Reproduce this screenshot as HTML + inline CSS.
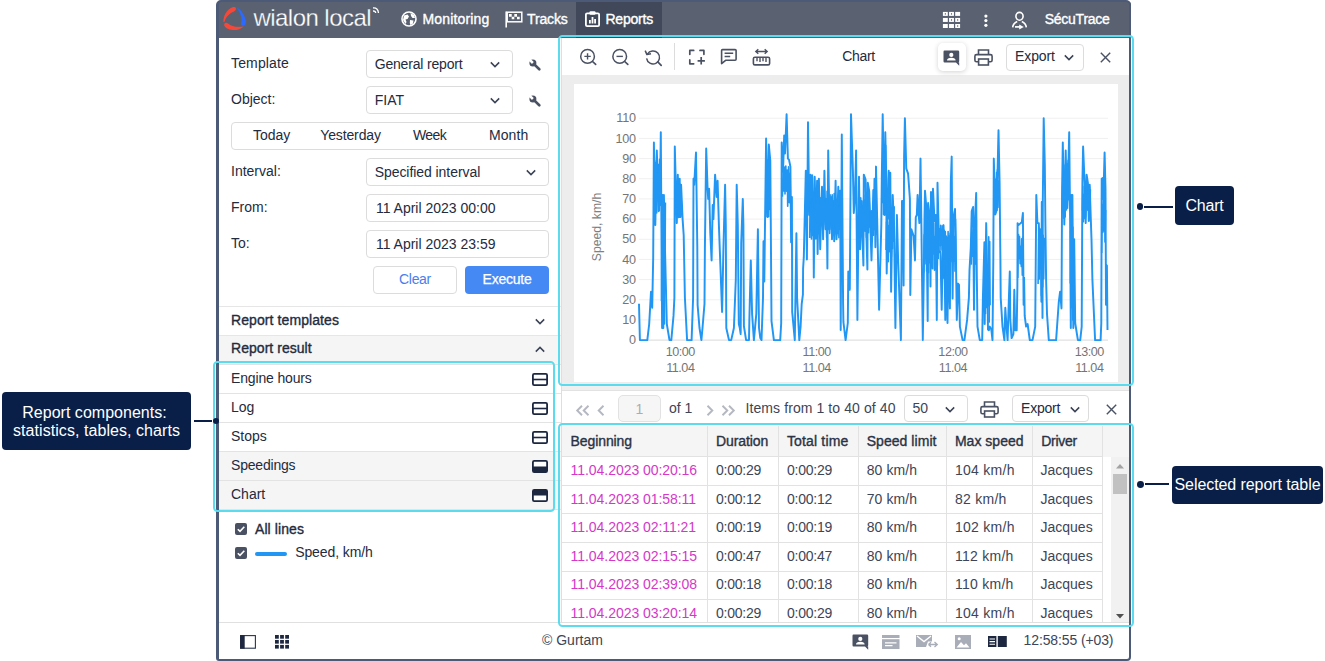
<!DOCTYPE html>
<html><head><meta charset="utf-8"><title>Reports</title>
<style>
*{box-sizing:border-box;margin:0;padding:0}
html,body{width:1325px;height:661px;overflow:hidden;background:#fff}
body{position:relative;font-family:"Liberation Sans",sans-serif;font-size:14px;color:#232b3e}
.abs{position:absolute}
.t{position:absolute;white-space:pre}
.box{position:absolute;border:1px solid #dcdcdc;border-radius:4px;background:#fff}
.cy{position:absolute;border:2.5px solid #5bdcee;border-radius:5px}
.call{position:absolute;background:#0a1f48;color:#fff;border-radius:4px}
svg{overflow:visible}
</style></head><body>
<div class="abs" style="left:217px;top:1px;width:913.5px;height:36.5px;background:#5a6170;border-radius:4px 4px 0 0;"></div>
<div class="abs" style="left:576.3px;top:2px;width:85.5px;height:35.5px;background:#404859;"></div>
<svg class="abs" style="left:222px;top:6px;" width="25" height="25" viewBox="0 0 25 25"><path d="M13.6 1.6 C13 0.6 10.5 1 8.5 2.2 C4.5 4.6 1.5 9.5 1.4 15.5 C1.5 16.3 2.2 16.5 2.6 15.5 C3.8 11 7.5 7 12 5.4 C14 4.7 14.4 2.8 13.6 1.6 Z" fill="#f4493a"/>
<path d="M14.3 1 C18.5 3.2 22.5 8 23.8 14.5 C24.4 18 22.5 20 20.6 19.8 C18.8 19.5 18.6 17.8 19.2 16.2 C20.2 12 18.2 6 14.3 1 Z" fill="#2c69ff"/>
<path d="M2.2 18.2 C2.6 16.6 4.6 16.2 6 17.4 C9.5 20.4 15 21.6 21.8 20.4 C18.5 23.2 13.5 24.8 9 23.8 C5.5 23 1.6 20.8 2.2 18.2 Z" fill="#f4493a"/></svg>
<div class="t" style="top:3.38px;font-size:24px;line-height:29px;height:29px;color:#fff;letter-spacing:-0.55px;left:253.5px;-webkit-text-stroke:0.28px #5a6170;">wialon local</div>
<svg class="abs" style="left:372px;top:6px;" width="8" height="8" viewBox="0 0 8 8"><path d="M1 2 Q6 1.5 6.5 7" fill="none" stroke="#fff" stroke-width="1.3"/><path d="M1 5 Q3.5 4.8 3.7 7" fill="none" stroke="#fff" stroke-width="1.3"/></svg>
<svg class="abs" style="left:401px;top:11px;" width="16" height="16" viewBox="0 0 16 16"><circle cx="8" cy="8" r="7" fill="none" stroke="#fff" stroke-width="1.6"/><path d="M3 4.5 L6.5 3.5 L8 5.5 L6.5 8 L4.5 8.5 L5.5 11 L4.5 13 L2 9Z M9.5 2 L13 4 L14 7 L11.5 7 L10 5Z M9 9 L12.5 9.5 L12 12.5 L9.5 14.3 L8.8 12Z" fill="#fff"/></svg>
<div class="t" style="top:10.55px;font-size:14px;line-height:17px;height:17px;color:#fff;letter-spacing:0.17px;left:422.4px;-webkit-text-stroke:0.36px;">Monitoring</div>
<svg class="abs" style="left:505px;top:10px;" width="18" height="18" viewBox="0 0 18 18"><path d="M1.2 1.5 V17.5" stroke="#fff" stroke-width="1.6" fill="none"/><rect x="2.2" y="2.2" width="14.6" height="9.6" fill="none" stroke="#fff" stroke-width="1.5"/><path d="M4 4h2.7v2.7H4z M9.3 4h2.7v2.7H9.3z M6.7 6.7h2.6v2.6H6.7z M12 6.7h2.7v2.6H12z" fill="#fff"/></svg>
<div class="t" style="top:10.55px;font-size:14px;line-height:17px;height:17px;color:#fff;letter-spacing:-0.15px;left:527px;-webkit-text-stroke:0.36px;">Tracks</div>
<svg class="abs" style="left:585px;top:11px;" width="15" height="16" viewBox="0 0 15 16"><rect x="0.9" y="2.4" width="13.2" height="12.7" rx="1.2" fill="none" stroke="#fff" stroke-width="1.8"/><rect x="4.5" y="0.3" width="6" height="3.5" rx="1" fill="#fff"/><path d="M4 12.5V9h1.8v3.5z M6.6 12.5V6h1.8v6.5z M9.2 12.5V8h1.8v4.5z" fill="#fff"/></svg>
<div class="t" style="top:10.55px;font-size:14px;line-height:17px;height:17px;color:#fff;letter-spacing:-0.2px;left:605.4px;-webkit-text-stroke:0.36px;">Reports</div>
<svg class="abs" style="left:0px;top:0px;" width="1325" height="661" viewBox="0 0 1325 661"><rect x="942.90" y="11.90" width="4.9" height="4" fill="#fff"/><rect x="944.80" y="13.20" width="1.1" height="1.4" fill="#5a6170"/><rect x="949.05" y="11.90" width="4.9" height="4" fill="#fff"/><rect x="950.95" y="13.20" width="1.1" height="1.4" fill="#5a6170"/><rect x="955.20" y="11.90" width="4.9" height="4" fill="#fff"/><rect x="942.90" y="17.95" width="4.9" height="4" fill="#fff"/><rect x="949.05" y="17.95" width="4.9" height="4" fill="#fff"/><rect x="950.95" y="19.25" width="1.1" height="1.4" fill="#5a6170"/><rect x="955.20" y="17.95" width="4.9" height="4" fill="#fff"/><rect x="957.10" y="19.25" width="1.1" height="1.4" fill="#5a6170"/><rect x="942.90" y="24.00" width="4.9" height="4" fill="#fff"/><rect x="949.05" y="24.00" width="4.9" height="4" fill="#fff"/><rect x="955.20" y="24.00" width="4.9" height="4" fill="#fff"/><rect x="957.10" y="25.30" width="1.1" height="1.4" fill="#5a6170"/></svg>
<svg class="abs" style="left:983.5px;top:13.5px;" width="4" height="14" viewBox="0 0 4 14"><circle cx="1.9" cy="2.1" r="1.6" fill="#fff"/><circle cx="1.9" cy="6.6" r="1.6" fill="#fff"/><circle cx="1.9" cy="11.3" r="1.6" fill="#fff"/></svg>
<svg class="abs" style="left:1010px;top:10px;" width="19" height="21" viewBox="0 0 19 21"><ellipse cx="9.5" cy="6.3" rx="3.6" ry="3.9" fill="none" stroke="#fff" stroke-width="1.6"/><path d="M2.7 17.4 C2.9 13.6 5 12.4 7.2 11.4 M11.8 11.4 C14 12.4 16.1 13.6 16.3 17.4" fill="none" stroke="#fff" stroke-width="1.6"/><path d="M5 16.9H10" stroke="#fff" stroke-width="1.7"/><path d="M9.2 14.5L13.8 16.9L9.2 19.5Z" fill="#fff"/></svg>
<div class="t" style="top:10.55px;font-size:14px;line-height:17px;height:17px;color:#fff;letter-spacing:-0.25px;left:1044.7px;-webkit-text-stroke:0.36px;">SécuTrace</div>
<div class="t" style="top:55.15px;font-size:14px;line-height:17px;height:17px;letter-spacing:0.15px;left:231px;">Template</div>
<div class="t" style="top:91.15px;font-size:14px;line-height:17px;height:17px;left:231px;">Object:</div>
<div class="t" style="top:163.15px;font-size:14px;line-height:17px;height:17px;left:231px;">Interval:</div>
<div class="t" style="top:199.15px;font-size:14px;line-height:17px;height:17px;left:231px;">From:</div>
<div class="t" style="top:235.15px;font-size:14px;line-height:17px;height:17px;left:231px;">To:</div>
<div class="box" style="left:366px;top:50px;width:147px;height:27.5px;"></div>
<div class="t" style="top:56.15px;font-size:14px;line-height:17px;height:17px;letter-spacing:-0.18px;left:374.7px;">General report</div>
<svg class="abs" style="left:490.3px;top:60.5px;" width="10" height="7" viewBox="0 0 10 7"><path d="M0.8 1.4 L5 5.6 L9.2 1.4" fill="none" stroke="#3a4255" stroke-width="1.5"/></svg>
<svg class="abs" style="left:529px;top:58.6px;" width="12" height="12" viewBox="0 0 12 12"><circle cx="3.9" cy="4" r="3.5" fill="#4a5162"/><path d="M3.9 4 L-1 -0.9" stroke="#fff" stroke-width="2.5"/><path d="M5 5.1 L10.3 10.2" stroke="#4a5162" stroke-width="2.7" stroke-linecap="round"/></svg>
<div class="box" style="left:366px;top:86px;width:147px;height:27.5px;"></div>
<div class="t" style="top:92.15px;font-size:14px;line-height:17px;height:17px;left:374.7px;">FIAT</div>
<svg class="abs" style="left:490.3px;top:96.5px;" width="10" height="7" viewBox="0 0 10 7"><path d="M0.8 1.4 L5 5.6 L9.2 1.4" fill="none" stroke="#3a4255" stroke-width="1.5"/></svg>
<svg class="abs" style="left:529px;top:94.6px;" width="12" height="12" viewBox="0 0 12 12"><circle cx="3.9" cy="4" r="3.5" fill="#4a5162"/><path d="M3.9 4 L-1 -0.9" stroke="#fff" stroke-width="2.5"/><path d="M5 5.1 L10.3 10.2" stroke="#4a5162" stroke-width="2.7" stroke-linecap="round"/></svg>
<div class="box" style="left:231px;top:122px;width:318px;height:27.5px;"></div>
<div class="t" style="top:127.15px;font-size:14px;line-height:17px;height:17px;left:253px;">Today</div>
<div class="t" style="top:127.15px;font-size:14px;line-height:17px;height:17px;letter-spacing:-0.14px;left:320.3px;">Yesterday</div>
<div class="t" style="top:127.15px;font-size:14px;line-height:17px;height:17px;letter-spacing:-0.6px;left:413px;">Week</div>
<div class="t" style="top:127.15px;font-size:14px;line-height:17px;height:17px;letter-spacing:0.08px;left:489px;">Month</div>
<div class="box" style="left:366px;top:158px;width:183px;height:27.5px;"></div>
<div class="t" style="top:164.15px;font-size:14px;line-height:17px;height:17px;letter-spacing:-0.06px;left:374.7px;">Specified interval</div>
<svg class="abs" style="left:526.3px;top:168.6px;" width="10" height="7" viewBox="0 0 10 7"><path d="M0.8 1.4 L5 5.6 L9.2 1.4" fill="none" stroke="#3a4255" stroke-width="1.5"/></svg>
<div class="box" style="left:366px;top:194px;width:183px;height:27.5px;"></div>
<div class="t" style="top:200.15px;font-size:14px;line-height:17px;height:17px;left:375.9px;">11 April 2023 00:00</div>
<div class="box" style="left:366px;top:230px;width:183px;height:27.5px;"></div>
<div class="t" style="top:236.15px;font-size:14px;line-height:17px;height:17px;left:375.9px;">11 April 2023 23:59</div>
<div class="box" style="left:373px;top:266px;width:84px;height:28px;"></div>
<div class="t" style="top:271.25px;font-size:14px;line-height:17px;height:17px;color:#4c7df0;letter-spacing:-0.3px;left:215px;width:400px;text-align:center;">Clear</div>
<div class="abs" style="left:465px;top:266px;width:84px;height:28px;background:#4589f5;border-radius:4px;"></div>
<div class="t" style="top:271.25px;font-size:14px;line-height:17px;height:17px;color:#fff;letter-spacing:-0.25px;left:307px;width:400px;text-align:center;-webkit-text-stroke:0.25px;">Execute</div>
<div class="abs" style="left:219px;top:306px;width:342px;height:1px;background:#e6e6e6;"></div>
<div class="t" style="top:311.65px;font-size:14px;line-height:17px;height:17px;letter-spacing:0.09px;left:231px;-webkit-text-stroke:0.36px;">Report templates</div>
<svg class="abs" style="left:535px;top:317.5px;" width="10" height="7" viewBox="0 0 10 7"><path d="M0.8 1.4 L5 5.6 L9.2 1.4" fill="none" stroke="#3a4255" stroke-width="1.5"/></svg>
<div class="abs" style="left:219px;top:335px;width:342px;height:1px;background:#e6e6e6;"></div>
<div class="abs" style="left:219px;top:336px;width:342px;height:28px;background:#f5f5f5;"></div>
<div class="t" style="top:340.35px;font-size:14px;line-height:17px;height:17px;letter-spacing:0.04px;left:231px;-webkit-text-stroke:0.36px;">Report result</div>
<svg class="abs" style="left:535px;top:345.5px;" width="10" height="7" viewBox="0 0 10 7"><path d="M0.8 5.6 L5 1.4 L9.2 5.6" fill="none" stroke="#3a4255" stroke-width="1.5"/></svg>
<div class="abs" style="left:219px;top:364px;width:342px;height:1px;background:#e3e3e3;"></div>
<div class="abs" style="left:219px;top:365px;width:342px;height:28px;background:#fff;"></div>
<div class="t" style="top:369.65px;font-size:14px;line-height:17px;height:17px;letter-spacing:-0.15px;left:231px;">Engine hours</div>
<svg class="abs" style="left:532px;top:373px;" width="16" height="13" viewBox="0 0 16 13"><rect x="0.9" y="0.9" width="14.2" height="11.2" rx="1.3" fill="#fff" stroke="#1d2740" stroke-width="1.8"/><path d="M1 6.5H15" stroke="#1d2740" stroke-width="1.6"/></svg>
<div class="abs" style="left:219px;top:393px;width:342px;height:1px;background:#e3e3e3;"></div>
<div class="abs" style="left:219px;top:394px;width:342px;height:28px;background:#fff;"></div>
<div class="t" style="top:398.65px;font-size:14px;line-height:17px;height:17px;letter-spacing:0px;left:231px;">Log</div>
<svg class="abs" style="left:532px;top:402px;" width="16" height="13" viewBox="0 0 16 13"><rect x="0.9" y="0.9" width="14.2" height="11.2" rx="1.3" fill="#fff" stroke="#1d2740" stroke-width="1.8"/><path d="M1 6.5H15" stroke="#1d2740" stroke-width="1.6"/></svg>
<div class="abs" style="left:219px;top:422px;width:342px;height:1px;background:#e3e3e3;"></div>
<div class="abs" style="left:219px;top:423px;width:342px;height:28px;background:#fff;"></div>
<div class="t" style="top:427.65px;font-size:14px;line-height:17px;height:17px;letter-spacing:0px;left:231px;">Stops</div>
<svg class="abs" style="left:532px;top:431px;" width="16" height="13" viewBox="0 0 16 13"><rect x="0.9" y="0.9" width="14.2" height="11.2" rx="1.3" fill="#fff" stroke="#1d2740" stroke-width="1.8"/><path d="M1 6.5H15" stroke="#1d2740" stroke-width="1.6"/></svg>
<div class="abs" style="left:219px;top:451px;width:342px;height:1px;background:#e3e3e3;"></div>
<div class="abs" style="left:219px;top:452px;width:342px;height:28px;background:#f5f5f5;"></div>
<div class="t" style="top:456.65px;font-size:14px;line-height:17px;height:17px;letter-spacing:-0.2px;left:231px;">Speedings</div>
<svg class="abs" style="left:532px;top:460px;" width="16" height="13" viewBox="0 0 16 13"><rect x="0.9" y="0.9" width="14.2" height="11.2" rx="1.3" fill="#fff" stroke="#1d2740" stroke-width="1.8"/><path d="M1 6.5H15V11Q15 12 14 12H2Q1 12 1 11Z" fill="#1d2740"/></svg>
<div class="abs" style="left:219px;top:480px;width:342px;height:1px;background:#e3e3e3;"></div>
<div class="abs" style="left:219px;top:481px;width:342px;height:28px;background:#f5f5f5;"></div>
<div class="t" style="top:485.65px;font-size:14px;line-height:17px;height:17px;letter-spacing:0px;left:231px;">Chart</div>
<svg class="abs" style="left:532px;top:489px;" width="16" height="13" viewBox="0 0 16 13"><rect x="0.9" y="0.9" width="14.2" height="11.2" rx="1.3" fill="#fff" stroke="#1d2740" stroke-width="1.8"/><path d="M1 6.5H15V2Q15 1 14 1H2Q1 1 1 2Z" fill="#1d2740"/></svg>
<div class="abs" style="left:219px;top:509px;width:342px;height:1px;background:#e3e3e3;"></div>
<svg class="abs" style="left:235px;top:523px;" width="12" height="12" viewBox="0 0 12 12"><rect width="12" height="12" rx="2" fill="#4a5162"/><path d="M2.8 6.2 L5 8.4 L9.3 3.8" fill="none" stroke="#fff" stroke-width="1.6"/></svg>
<div class="t" style="top:520.65px;font-size:14px;line-height:17px;height:17px;letter-spacing:0.08px;left:255px;-webkit-text-stroke:0.36px;">All lines</div>
<svg class="abs" style="left:235px;top:547px;" width="12" height="12" viewBox="0 0 12 12"><rect width="12" height="12" rx="2" fill="#4a5162"/><path d="M2.8 6.2 L5 8.4 L9.3 3.8" fill="none" stroke="#fff" stroke-width="1.6"/></svg>
<div class="abs" style="left:255px;top:551.5px;width:32px;height:4.0px;background:#2196f3;border-radius:2px;"></div>
<div class="t" style="top:544.45px;font-size:14px;line-height:17px;height:17px;letter-spacing:-0.1px;left:295.2px;">Speed, km/h</div>
<div class="abs" style="left:562px;top:37.5px;width:567px;height:37.099999999999994px;background:#fff;"></div>
<div class="abs" style="left:562px;top:74.6px;width:567px;height:0.8000000000000114px;background:#e4e4e4;"></div>
<div class="abs" style="left:562px;top:75.4px;width:567px;height:310.6px;background:#ededed;"></div>
<svg class="abs" style="left:0px;top:0px;" width="1325" height="661" viewBox="0 0 1325 661"><circle cx="587.55" cy="56.4" r="6.85" fill="none" stroke="#4a5163" stroke-width="1.5"/><path d="M592.55 61.5 l3.1 2.9" stroke="#4a5163" stroke-width="1.7" stroke-linecap="round"/><path d="M584.3499999999999 56.4h6.4M587.55 53.199999999999996v6.4" stroke="#4a5163" stroke-width="1.4"/></svg>
<svg class="abs" style="left:0px;top:0px;" width="1325" height="661" viewBox="0 0 1325 661"><circle cx="619.7" cy="56.4" r="6.85" fill="none" stroke="#4a5163" stroke-width="1.5"/><path d="M624.7 61.5 l3.1 2.9" stroke="#4a5163" stroke-width="1.7" stroke-linecap="round"/><path d="M616.5 56.4h6.4" stroke="#4a5163" stroke-width="1.4"/></svg>
<svg class="abs" style="left:643.2px;top:46.5px;" width="22" height="22" viewBox="0 0 22 22"><path d="M4.4 7.2 A6.5 6.5 0 1 1 3.6 11.4" fill="none" stroke="#4a5163" stroke-width="1.5"/><path d="M2.2 3.6 L3.9 7.6 L8 6.7" fill="none" stroke="#4a5163" stroke-width="1.5" stroke-linejoin="round"/><path d="M14.8 14.9 l3.4 3.4" stroke="#4a5163" stroke-width="1.7" stroke-linecap="round"/></svg>
<div class="abs" style="left:674.3px;top:43px;width:1.0px;height:27px;background:#dcdcdc;"></div>
<svg class="abs" style="left:688px;top:48px;" width="18" height="18" viewBox="0 0 18 18"><path d="M1.8 6.3V2.4H5.7 M12 2.4H15.9V6.3 M1.8 11.9V15.8H5.7" fill="none" stroke="#4a5163" stroke-width="1.7" stroke-linejoin="round" stroke-linecap="round"/><path d="M9.6 12.8H16.9 M13.2 9.1V16.5" stroke="#4a5163" stroke-width="1.7"/></svg>
<svg class="abs" style="left:720px;top:47.9px;" width="18" height="17" viewBox="0 0 18 17"><path d="M2.5 1.6H15.1Q16.1 1.6 16.1 2.6V11.3Q16.1 12.3 15.1 12.3H5.6L1.6 15.6V2.6Q1.6 1.6 2.5 1.6Z" fill="none" stroke="#4a5163" stroke-width="1.6" stroke-linejoin="round"/><path d="M4.6 5.2H13.2 M4.6 8.4H10.2" stroke="#4a5163" stroke-width="1.5"/></svg>
<svg class="abs" style="left:751.5px;top:48px;" width="19" height="20" viewBox="0 0 19 20"><path d="M4 3.5H15 M6.3 1.2L3.8 3.5L6.3 5.8 M12.7 1.2L15.2 3.5L12.7 5.8" fill="none" stroke="#4a5163" stroke-width="1.4"/><rect x="1.4" y="9.3" width="16.2" height="7.6" rx="1.5" fill="none" stroke="#4a5163" stroke-width="1.6"/><path d="M5 10V13.2M8 10V14M11 10V13.2M14 10V14" stroke="#4a5163" stroke-width="1.4"/></svg>
<div class="t" style="top:47.85px;font-size:14px;line-height:17px;height:17px;letter-spacing:-0.35px;left:658.5px;width:400px;text-align:center;">Chart</div>
<div class="abs" style="left:938px;top:43px;width:28.3px;height:28px;background:#fff;border-radius:5px;box-shadow:0 1px 5px rgba(0,0,0,.18)"></div>
<svg class="abs" style="left:943.3px;top:49.6px;" width="17" height="16" viewBox="0 0 17 16"><path d="M1.5 0.5H15Q16.2 0.5 16.2 1.7V11.3Q16.2 12.5 15 12.5H13L16.2 15.8V12.5H1.5Q0.5 12.5 0.5 11.3V1.7Q0.5 0.5 1.5 0.5Z" fill="#4a5163"/><circle cx="8.3" cy="4.9" r="2.1" fill="#fff"/><path d="M4 10.4Q4 7.8 8.3 7.8Q12.6 7.8 12.6 10.4Z" fill="#fff"/></svg>
<svg class="abs" style="left:973.7px;top:48.5px;" width="19" height="17" viewBox="0 0 19 17"><path d="M4.5 5.5V1H14.5V5.5" fill="none" stroke="#4a5163" stroke-width="1.6"/><rect x="0.9" y="5.6" width="17.2" height="7.2" rx="1.6" fill="none" stroke="#4a5163" stroke-width="1.6"/><rect x="4.6" y="10" width="9.8" height="6" fill="#fff" stroke="#4a5163" stroke-width="1.6"/></svg>
<div class="box" style="left:1006px;top:43.5px;width:77.5px;height:27.0px;"></div>
<div class="t" style="top:47.85px;font-size:14px;line-height:17px;height:17px;letter-spacing:-0.1px;left:1015px;">Export</div>
<svg class="abs" style="left:1064px;top:54px;" width="10" height="7" viewBox="0 0 10 7"><path d="M0.8 1.4 L5 5.6 L9.2 1.4" fill="none" stroke="#3a4255" stroke-width="1.5"/></svg>
<svg class="abs" style="left:1099.7px;top:51.6px;" width="11" height="11" viewBox="0 0 11 11"><path d="M0.8 0.8L10.2 10.2M10.2 0.8L0.8 10.2" stroke="#4a5163" stroke-width="1.4"/></svg>
<div class="abs" style="left:574px;top:84px;width:544px;height:298px;background:#fff;"></div>
<div class="abs" style="left:562px;top:386px;width:567px;height:4.300000000000011px;background:#efefef;"></div>
<div class="abs" style="left:562px;top:390.3px;width:567px;height:0.8999999999999773px;background:#e2e2e2;"></div>
<div class="abs" style="left:562px;top:391.2px;width:567px;height:34.80000000000001px;background:#fff;"></div>
<svg class="abs" style="left:576.3px;top:404.5px;" width="14" height="11" viewBox="0 0 14 11"><path d="M6 0.8L1.2 5.5L6 10.2M12.5 0.8L7.7 5.5L12.5 10.2" fill="none" stroke="#b4b8c0" stroke-width="1.9"/></svg>
<svg class="abs" style="left:597.3px;top:404.5px;" width="8" height="11" viewBox="0 0 8 11"><path d="M6.5 0.8L1.7 5.5L6.5 10.2" fill="none" stroke="#b4b8c0" stroke-width="1.9"/></svg>
<div class="box" style="left:618.3px;top:395px;width:42.40000000000009px;height:27.30000000000001px;background:#f6f6f6;border-color:#e2e2e2;border-radius:5px;"></div>
<div class="t" style="top:401.05px;font-size:14px;line-height:17px;height:17px;color:#a9adb5;left:439.5px;width:400px;text-align:center;">1</div>
<div class="t" style="top:399.95px;font-size:14px;line-height:17px;height:17px;color:#3d4556;left:669px;">of 1</div>
<svg class="abs" style="left:706px;top:404.5px;" width="8" height="11" viewBox="0 0 8 11"><path d="M1.5 0.8L6.3 5.5L1.5 10.2" fill="none" stroke="#b4b8c0" stroke-width="1.9"/></svg>
<svg class="abs" style="left:721px;top:404.5px;" width="14" height="11" viewBox="0 0 14 11"><path d="M1.5 0.8L6.3 5.5L1.5 10.2M8 0.8L12.8 5.5L8 10.2" fill="none" stroke="#b4b8c0" stroke-width="1.9"/></svg>
<div class="t" style="top:399.95px;font-size:14px;line-height:17px;height:17px;color:#3d4556;letter-spacing:0.09px;left:745.5px;">Items from 1 to 40 of 40</div>
<div class="box" style="left:904px;top:395px;width:63.5px;height:27.30000000000001px;"></div>
<div class="t" style="top:399.95px;font-size:14px;line-height:17px;height:17px;color:#3d4556;left:912.5px;">50</div>
<svg class="abs" style="left:945px;top:405.5px;" width="10" height="7" viewBox="0 0 10 7"><path d="M0.8 1.4 L5 5.6 L9.2 1.4" fill="none" stroke="#3a4255" stroke-width="1.5"/></svg>
<svg class="abs" style="left:980.3px;top:400.5px;" width="19" height="17" viewBox="0 0 19 17"><path d="M4.5 5.5V1H14.5V5.5" fill="none" stroke="#4a5163" stroke-width="1.6"/><rect x="0.9" y="5.6" width="17.2" height="7.2" rx="1.6" fill="none" stroke="#4a5163" stroke-width="1.6"/><rect x="4.6" y="10" width="9.8" height="6" fill="#fff" stroke="#4a5163" stroke-width="1.6"/></svg>
<div class="box" style="left:1012.3px;top:395px;width:77.20000000000005px;height:27.30000000000001px;"></div>
<div class="t" style="top:399.95px;font-size:14px;line-height:17px;height:17px;letter-spacing:-0.2px;left:1021px;">Export</div>
<svg class="abs" style="left:1070px;top:405.5px;" width="10" height="7" viewBox="0 0 10 7"><path d="M0.8 1.4 L5 5.6 L9.2 1.4" fill="none" stroke="#3a4255" stroke-width="1.5"/></svg>
<svg class="abs" style="left:1105.5px;top:403.5px;" width="11" height="11" viewBox="0 0 11 11"><path d="M0.8 0.8L10.2 10.2M10.2 0.8L0.8 10.2" stroke="#4a5163" stroke-width="1.4"/></svg>
<div class="abs" style="left:562px;top:426px;width:567px;height:30.5px;background:#f5f5f5;"></div>
<div class="abs" style="left:1111px;top:456.5px;width:18px;height:170.5px;background:#f1f1f1;"></div>
<div class="t" style="top:432.55px;font-size:14px;line-height:17px;height:17px;color:#2a3244;letter-spacing:-0.1px;left:570.6px;-webkit-text-stroke:0.36px;">Beginning</div>
<div class="t" style="top:432.55px;font-size:14px;line-height:17px;height:17px;color:#2a3244;letter-spacing:-0.08px;left:715.9px;-webkit-text-stroke:0.36px;">Duration</div>
<div class="t" style="top:432.55px;font-size:14px;line-height:17px;height:17px;color:#2a3244;letter-spacing:0.17px;left:786.9px;-webkit-text-stroke:0.36px;">Total time</div>
<div class="t" style="top:432.55px;font-size:14px;line-height:17px;height:17px;color:#2a3244;letter-spacing:0.05px;left:866.6999999999999px;-webkit-text-stroke:0.36px;">Speed limit</div>
<div class="t" style="top:432.55px;font-size:14px;line-height:17px;height:17px;color:#2a3244;letter-spacing:0.02px;left:954.9px;-webkit-text-stroke:0.36px;">Max speed</div>
<div class="t" style="top:432.55px;font-size:14px;line-height:17px;height:17px;color:#2a3244;letter-spacing:-0.25px;left:1041.2px;-webkit-text-stroke:0.36px;">Driver</div>
<div class="t" style="top:462.05px;font-size:14px;line-height:17px;height:17px;color:#d538c8;letter-spacing:-0.05px;left:570.6px;">11.04.2023 00:20:16</div>
<div class="t" style="top:462.05px;font-size:14px;line-height:17px;height:17px;color:#3d4556;letter-spacing:-0.22px;left:715.9px;">0:00:29</div>
<div class="t" style="top:462.05px;font-size:14px;line-height:17px;height:17px;color:#3d4556;letter-spacing:-0.22px;left:786.9px;">0:00:29</div>
<div class="t" style="top:462.05px;font-size:14px;line-height:17px;height:17px;color:#3d4556;letter-spacing:0.1px;left:866.6999999999999px;">80 km/h</div>
<div class="t" style="top:462.05px;font-size:14px;line-height:17px;height:17px;color:#3d4556;letter-spacing:0.28px;left:954.9px;">104 km/h</div>
<div class="t" style="top:462.05px;font-size:14px;line-height:17px;height:17px;color:#3d4556;letter-spacing:0px;left:1040.5px;">Jacques</div>
<div class="t" style="top:490.65px;font-size:14px;line-height:17px;height:17px;color:#d538c8;letter-spacing:-0.05px;left:570.6px;">11.04.2023 01:58:11</div>
<div class="t" style="top:490.65px;font-size:14px;line-height:17px;height:17px;color:#3d4556;letter-spacing:-0.22px;left:715.9px;">0:00:12</div>
<div class="t" style="top:490.65px;font-size:14px;line-height:17px;height:17px;color:#3d4556;letter-spacing:-0.22px;left:786.9px;">0:00:12</div>
<div class="t" style="top:490.65px;font-size:14px;line-height:17px;height:17px;color:#3d4556;letter-spacing:0.1px;left:866.6999999999999px;">70 km/h</div>
<div class="t" style="top:490.65px;font-size:14px;line-height:17px;height:17px;color:#3d4556;letter-spacing:0.28px;left:954.9px;">82 km/h</div>
<div class="t" style="top:490.65px;font-size:14px;line-height:17px;height:17px;color:#3d4556;letter-spacing:0px;left:1040.5px;">Jacques</div>
<div class="t" style="top:519.25px;font-size:14px;line-height:17px;height:17px;color:#d538c8;letter-spacing:-0.05px;left:570.6px;">11.04.2023 02:11:21</div>
<div class="t" style="top:519.25px;font-size:14px;line-height:17px;height:17px;color:#3d4556;letter-spacing:-0.22px;left:715.9px;">0:00:19</div>
<div class="t" style="top:519.25px;font-size:14px;line-height:17px;height:17px;color:#3d4556;letter-spacing:-0.22px;left:786.9px;">0:00:19</div>
<div class="t" style="top:519.25px;font-size:14px;line-height:17px;height:17px;color:#3d4556;letter-spacing:0.1px;left:866.6999999999999px;">80 km/h</div>
<div class="t" style="top:519.25px;font-size:14px;line-height:17px;height:17px;color:#3d4556;letter-spacing:0.28px;left:954.9px;">102 km/h</div>
<div class="t" style="top:519.25px;font-size:14px;line-height:17px;height:17px;color:#3d4556;letter-spacing:0px;left:1040.5px;">Jacques</div>
<div class="t" style="top:547.85px;font-size:14px;line-height:17px;height:17px;color:#d538c8;letter-spacing:-0.05px;left:570.6px;">11.04.2023 02:15:15</div>
<div class="t" style="top:547.85px;font-size:14px;line-height:17px;height:17px;color:#3d4556;letter-spacing:-0.22px;left:715.9px;">0:00:47</div>
<div class="t" style="top:547.85px;font-size:14px;line-height:17px;height:17px;color:#3d4556;letter-spacing:-0.22px;left:786.9px;">0:00:47</div>
<div class="t" style="top:547.85px;font-size:14px;line-height:17px;height:17px;color:#3d4556;letter-spacing:0.1px;left:866.6999999999999px;">80 km/h</div>
<div class="t" style="top:547.85px;font-size:14px;line-height:17px;height:17px;color:#3d4556;letter-spacing:0.28px;left:954.9px;">112 km/h</div>
<div class="t" style="top:547.85px;font-size:14px;line-height:17px;height:17px;color:#3d4556;letter-spacing:0px;left:1040.5px;">Jacques</div>
<div class="t" style="top:576.45px;font-size:14px;line-height:17px;height:17px;color:#d538c8;letter-spacing:-0.05px;left:570.6px;">11.04.2023 02:39:08</div>
<div class="t" style="top:576.45px;font-size:14px;line-height:17px;height:17px;color:#3d4556;letter-spacing:-0.22px;left:715.9px;">0:00:18</div>
<div class="t" style="top:576.45px;font-size:14px;line-height:17px;height:17px;color:#3d4556;letter-spacing:-0.22px;left:786.9px;">0:00:18</div>
<div class="t" style="top:576.45px;font-size:14px;line-height:17px;height:17px;color:#3d4556;letter-spacing:0.1px;left:866.6999999999999px;">80 km/h</div>
<div class="t" style="top:576.45px;font-size:14px;line-height:17px;height:17px;color:#3d4556;letter-spacing:0.28px;left:954.9px;">110 km/h</div>
<div class="t" style="top:576.45px;font-size:14px;line-height:17px;height:17px;color:#3d4556;letter-spacing:0px;left:1040.5px;">Jacques</div>
<div class="t" style="top:605.05px;font-size:14px;line-height:17px;height:17px;color:#d538c8;letter-spacing:-0.05px;left:570.6px;">11.04.2023 03:20:14</div>
<div class="t" style="top:605.05px;font-size:14px;line-height:17px;height:17px;color:#3d4556;letter-spacing:-0.22px;left:715.9px;">0:00:29</div>
<div class="t" style="top:605.05px;font-size:14px;line-height:17px;height:17px;color:#3d4556;letter-spacing:-0.22px;left:786.9px;">0:00:29</div>
<div class="t" style="top:605.05px;font-size:14px;line-height:17px;height:17px;color:#3d4556;letter-spacing:0.1px;left:866.6999999999999px;">80 km/h</div>
<div class="t" style="top:605.05px;font-size:14px;line-height:17px;height:17px;color:#3d4556;letter-spacing:0.28px;left:954.9px;">104 km/h</div>
<div class="t" style="top:605.05px;font-size:14px;line-height:17px;height:17px;color:#3d4556;letter-spacing:0px;left:1040.5px;">Jacques</div>
<div class="abs" style="left:562px;top:456.2px;width:540.3px;height:1.0px;background:#e2e2e2;"></div>
<div class="abs" style="left:562px;top:484.8px;width:540.3px;height:1.0px;background:#e2e2e2;"></div>
<div class="abs" style="left:562px;top:513.4px;width:540.3px;height:1.0px;background:#e2e2e2;"></div>
<div class="abs" style="left:562px;top:542.0px;width:540.3px;height:1.0px;background:#e2e2e2;"></div>
<div class="abs" style="left:562px;top:570.6px;width:540.3px;height:1.0px;background:#e2e2e2;"></div>
<div class="abs" style="left:562px;top:599.2px;width:540.3px;height:1.0px;background:#e2e2e2;"></div>
<div class="abs" style="left:707.0px;top:426px;width:1.0px;height:201px;background:#e2e2e2;"></div>
<div class="abs" style="left:778.0px;top:426px;width:1.0px;height:201px;background:#e2e2e2;"></div>
<div class="abs" style="left:857.8px;top:426px;width:1.0px;height:201px;background:#e2e2e2;"></div>
<div class="abs" style="left:946.0px;top:426px;width:1.0px;height:201px;background:#e2e2e2;"></div>
<div class="abs" style="left:1032.3px;top:426px;width:1.0px;height:201px;background:#e2e2e2;"></div>
<div class="abs" style="left:1101.8px;top:426px;width:1.0px;height:201px;background:#e2e2e2;"></div>
<svg class="abs" style="left:1115.6px;top:463.6px;" width="8" height="5" viewBox="0 0 8 5"><path d="M0 4.6L4 0L8 4.6Z" fill="#a3a3a3"/></svg>
<div class="abs" style="left:1113px;top:473.8px;width:13.5px;height:20.19999999999999px;background:#c1c1c1;"></div>
<svg class="abs" style="left:1115.6px;top:613.6px;" width="8" height="5" viewBox="0 0 8 5"><path d="M0 0L4 4.6L8 0Z" fill="#505050"/></svg>
<div class="abs" style="left:219px;top:622px;width:910px;height:1px;background:#e0e0e0;"></div>
<div class="abs" style="left:219px;top:623px;width:910px;height:36px;background:#fff;"></div>
<svg class="abs" style="left:240px;top:635px;" width="16" height="14" viewBox="0 0 16 14"><rect x="0.6" y="0.6" width="14.8" height="12.6" fill="#fff" stroke="#2a3450" stroke-width="1.1"/><rect x="0.1" y="0.1" width="4.6" height="13.6" fill="#1d2740"/></svg>
<svg class="abs" style="left:275px;top:635.1px;" width="15" height="15" viewBox="0 0 15 15"><rect x="0.00" y="0.00" width="3.8" height="3.7" fill="#1d2740"/><rect x="5.10" y="0.00" width="3.8" height="3.7" fill="#1d2740"/><rect x="10.20" y="0.00" width="3.8" height="3.7" fill="#1d2740"/><rect x="0.00" y="4.95" width="3.8" height="3.7" fill="#1d2740"/><rect x="5.10" y="4.95" width="3.8" height="3.7" fill="#1d2740"/><rect x="10.20" y="4.95" width="3.8" height="3.7" fill="#1d2740"/><rect x="0.00" y="9.90" width="3.8" height="3.7" fill="#1d2740"/><rect x="5.10" y="9.90" width="3.8" height="3.7" fill="#1d2740"/><rect x="10.20" y="9.90" width="3.8" height="3.7" fill="#1d2740"/></svg>
<div class="t" style="top:631.65px;font-size:14px;line-height:17px;height:17px;color:#3d4556;letter-spacing:0px;left:542px;">© Gurtam</div>
<svg class="abs" style="left:851.8px;top:633.8px;" width="17" height="16" viewBox="0 0 17 16"><path d="M1.5 0.5H15Q16.2 0.5 16.2 1.7V11.3Q16.2 12.5 15 12.5H13L16.2 15.8V12.5H1.5Q0.5 12.5 0.5 11.3V1.7Q0.5 0.5 1.5 0.5Z" fill="#4a5163"/><circle cx="8.3" cy="4.9" r="2.1" fill="#fff"/><path d="M4 10.4Q4 7.8 8.3 7.8Q12.6 7.8 12.6 10.4Z" fill="#fff"/></svg>
<svg class="abs" style="left:882px;top:635px;" width="18" height="14" viewBox="0 0 18 14"><rect x="0" y="0" width="17.5" height="3" fill="#a9adb7"/><rect x="0" y="4.2" width="17.5" height="9.8" fill="#a9adb7"/><path d="M3 7.8H14.5M3 10.6H10.5" stroke="#fff" stroke-width="1.3"/></svg>
<svg class="abs" style="left:916px;top:635px;" width="22" height="14" viewBox="0 0 22 14"><path d="M0 0H16V6.5H12L10 12H0Z" fill="#a9adb7"/><path d="M1 1L8 6.6L15 1" fill="none" stroke="#fff" stroke-width="1.3"/><path d="M13 9.5H21M18.5 7L21.3 9.5L18.5 12M12.5 9.5L15 7.2M12.5 9.5L15 11.8" fill="none" stroke="#a9adb7" stroke-width="1.3"/></svg>
<svg class="abs" style="left:955px;top:635px;" width="16" height="14" viewBox="0 0 16 14"><rect width="16" height="14" fill="#a9adb7"/><path d="M1.5 12.5L6 7L9 10.3L11 8.3L14.5 12.5Z" fill="#fff"/><circle cx="4.2" cy="3.8" r="1.5" fill="#fff"/></svg>
<svg class="abs" style="left:988px;top:636px;" width="19" height="11" viewBox="0 0 19 11"><rect x="0" y="0" width="8.4" height="11" fill="#1d2740"/><path d="M1.5 3H7M1.5 5.6H7M1.5 8.2H7" stroke="#fff" stroke-width="1.1"/><rect x="9.8" y="0" width="9" height="11" fill="#1d2740"/></svg>
<div class="t" style="top:631.65px;font-size:14px;line-height:17px;height:17px;color:#3d4556;letter-spacing:-0.12px;left:1023.6px;">12:58:55 (+03)</div>
<div class="abs" style="left:561px;top:37.5px;width:1px;height:585.5px;background:#dedede;"></div>
<div class="abs" style="left:216px;top:0;width:915.2px;height:661px;border:solid #4c5a78;border-width:2px 2px 2.5px 3px;border-radius:5px 5px 4px 3px"></div>
<div class="abs" style="left:558.2px;top:34.8px;width:575.8px;height:351.09999999999997px;border:2.1px solid #5bdcee;border-top-width:2.7px;border-radius:4.5px"></div>
<div class="abs" style="left:558.2px;top:423.3px;width:575.8px;height:203.7px;border:2.1px solid #5bdcee;border-top-width:2.1px;border-radius:4.5px"></div>
<div class="abs" style="left:213.4px;top:361px;width:341.4px;height:151.29999999999995px;border:2.1px solid #5bdcee;border-top-width:2.1px;border-radius:4.5px"></div>
<div class="abs" style="left:1175px;top:186px;width:59px;height:39px;background:#0a1f48;border-radius:4px;"></div>
<div class="t" style="top:196.16px;font-size:16px;line-height:19px;height:19px;color:#fff;letter-spacing:-0.2px;left:1004.5px;width:400px;text-align:center;">Chart</div>
<div class="abs" style="left:1144.3px;top:205.7px;width:28.700000000000045px;height:2.200000000000017px;background:#0a1f48;"></div>
<div class="abs" style="left:1136.6999999999998px;top:203.4px;width:6.8px;height:6.8px;border-radius:50%;background:#0a1f48"></div>
<div class="abs" style="left:1172px;top:465.6px;width:151.20000000000005px;height:38.0px;background:#0a1f48;border-radius:4px;"></div>
<div class="t" style="top:475.26px;font-size:16px;line-height:19px;height:19px;color:#fff;letter-spacing:-0.08px;left:1047.5px;width:400px;text-align:center;">Selected report table</div>
<div class="abs" style="left:1145.3px;top:483.1px;width:24.200000000000045px;height:2.1999999999999886px;background:#0a1f48;"></div>
<div class="abs" style="left:1136.8px;top:480.8px;width:6.8px;height:6.8px;border-radius:50%;background:#0a1f48"></div>
<div class="abs" style="left:2.2px;top:392px;width:188.8px;height:58px;background:#0a1f48;border-radius:4px;"></div>
<div class="t" style="top:402.56px;font-size:16px;line-height:19px;height:19px;color:#fff;letter-spacing:0.02px;left:-105.5px;width:400px;text-align:center;">Report components:</div>
<div class="t" style="top:421.36px;font-size:16px;line-height:19px;height:19px;color:#fff;letter-spacing:0.06px;left:-103.5px;width:400px;text-align:center;">statistics, tables, charts</div>
<div class="abs" style="left:193.5px;top:419.9px;width:18.30000000000001px;height:2.2000000000000455px;background:#0a1f48;"></div>
<div class="abs" style="left:212.6px;top:417.6px;width:6.8px;height:6.8px;border-radius:50%;background:#0a1f48"></div>
<svg class="abs" style="left:0;top:0" width="1325" height="661" viewBox="0 0 1325 661"><path d="M639 340.1H1108" stroke="#d9d9d9" stroke-width="1"/><path d="M639 319.9H1108" stroke="#f0f0f0" stroke-width="1"/><path d="M639 299.8H1108" stroke="#f0f0f0" stroke-width="1"/><path d="M639 279.6H1108" stroke="#f0f0f0" stroke-width="1"/><path d="M639 259.4H1108" stroke="#f0f0f0" stroke-width="1"/><path d="M639 239.3H1108" stroke="#f0f0f0" stroke-width="1"/><path d="M639 219.1H1108" stroke="#f0f0f0" stroke-width="1"/><path d="M639 198.9H1108" stroke="#f0f0f0" stroke-width="1"/><path d="M639 178.7H1108" stroke="#f0f0f0" stroke-width="1"/><path d="M639 158.6H1108" stroke="#f0f0f0" stroke-width="1"/><path d="M639 138.4H1108" stroke="#f0f0f0" stroke-width="1"/><path d="M639 118.2H1108" stroke="#f0f0f0" stroke-width="1"/><polyline points="639.0,303.8 639.9,340.1 647.3,340.1 649.2,324.0 651.0,291.7 652.2,307.8 653.2,257.4 653.9,142.4 655.3,225.1 656.8,150.5 658.2,194.9 659.1,164.6 659.9,205.0 660.8,132.3 662.1,328.0 662.6,194.9 663.3,328.0 663.9,194.9 665.0,249.3 666.8,324.0 669.5,340.1 671.3,340.1 673.5,315.9 674.4,297.7 674.8,146.5 676.8,223.1 677.8,174.7 678.9,217.1 679.7,178.7 680.4,217.1 681.1,184.8 682.6,219.1 683.7,235.2 684.9,297.7 687.1,340.1 691.6,340.1 693.1,297.7 693.5,178.7 694.2,184.8 696.0,152.5 697.3,247.3 697.6,304.8 699.5,328.0 701.4,340.1 702.5,328.0 704.5,303.8 704.9,247.3 706.2,148.5 707.6,188.8 708.2,198.9 709.1,188.8 710.3,233.2 711.6,260.4 712.7,205.0 713.4,219.1 715.1,174.7 716.7,196.9 717.6,180.8 718.9,225.1 720.3,263.5 722.1,311.9 723.4,249.3 725.1,184.8 725.8,225.1 726.3,328.0 729.0,340.1 731.2,340.1 733.9,328.0 735.8,279.6 736.7,184.8 737.8,225.1 738.8,324.0 739.8,328.0 740.7,334.0 741.2,243.3 742.8,198.9 743.4,225.1 743.9,326.0 746.1,340.1 749.0,340.1 749.4,317.9 750.8,260.4 752.1,313.9 753.9,340.1 756.3,313.9 757.9,229.2 759.0,328.0 760.3,338.1 761.5,340.1 763.0,297.7 763.5,241.3 764.3,281.6 765.0,225.1 766.1,138.4 767.5,217.1 768.8,144.5 770.3,160.6 770.8,225.1 771.5,321.1 773.9,340.1 780.2,340.1 781.2,323.0 781.7,142.4 783.0,171.7 784.2,135.4 785.0,153.5 786.6,114.2 787.9,158.6 789.0,159.6 790.4,166.6 790.8,209.0 791.1,242.3 791.9,196.9 792.2,311.9 794.8,340.1 795.7,279.6 796.4,233.2 797.1,297.7 799.3,340.1 800.6,326.6 801.7,303.8 802.9,294.7 803.1,268.5 803.8,257.4 805.8,170.7 806.9,259.4 808.0,122.3 809.3,215.0 810.4,174.7 811.1,219.1 812.2,175.3 813.5,229.2 813.8,277.6 814.7,176.7 816.0,229.2 817.1,180.8 817.6,254.0 818.9,178.7 820.2,249.3 822.0,186.8 823.1,239.3 824.4,170.7 825.6,229.2 826.5,198.9 827.4,268.5 828.2,150.5 829.6,229.2 831.1,196.9 832.0,239.3 833.8,200.9 834.2,241.3 835.6,180.8 836.5,239.3 838.3,186.8 839.2,229.2 840.2,190.8 840.7,330.0 841.8,134.4 843.1,303.8 843.4,321.9 845.6,340.1 847.8,323.0 848.3,271.5 849.8,289.7 851.0,114.2 852.9,170.7 853.8,213.0 855.0,196.9 856.1,150.5 857.4,319.9 859.0,176.7 860.1,249.3 861.6,200.9 862.5,239.3 863.4,265.5 863.8,174.7 865.6,179.7 866.5,239.3 867.4,269.5 867.8,182.8 869.2,190.8 870.0,215.0 871.5,260.4 873.3,190.0 873.8,219.1 874.5,178.7 875.4,247.3 876.0,166.6 877.3,225.1 879.1,309.8 881.3,225.1 881.8,178.7 882.7,114.2 883.8,178.7 884.5,215.0 885.3,132.3 886.3,180.8 886.7,273.5 887.6,219.1 888.7,170.7 889.6,219.1 890.3,172.7 891.1,291.7 892.7,194.9 894.0,223.1 895.4,328.0 896.9,215.0 898.1,259.4 900.9,340.1 902.0,200.9 902.7,200.9 903.6,285.6 904.1,156.6 904.9,118.2 906.3,168.7 908.1,173.7 909.9,198.9 910.3,294.9 911.4,229.2 912.3,232.2 913.6,235.8 915.0,260.4 915.8,217.1 916.8,215.0 917.6,194.9 918.7,215.0 919.4,223.1 920.5,158.6 921.4,225.1 922.8,340.1 923.9,270.3 924.5,217.1 925.0,190.8 926.3,207.0 927.7,321.1 928.1,202.9 929.9,219.1 930.5,286.6 931.0,191.9 931.7,211.8 932.6,268.5 933.0,188.8 934.5,221.1 935.7,215.0 936.8,319.9 937.5,182.8 938.6,227.1 939.0,252.2 940.4,251.4 941.7,309.8 942.6,259.4 943.5,225.1 944.4,249.3 945.3,319.9 946.3,259.4 947.5,323.0 948.4,249.3 949.9,308.4 950.8,182.8 951.7,156.6 952.6,298.5 953.5,217.1 955.0,209.0 955.7,239.3 956.8,319.9 958.1,283.6 959.0,284.8 959.9,326.6 962.6,340.1 964.4,340.1 967.1,319.9 968.9,297.7 969.5,270.3 970.8,247.3 971.7,211.0 973.1,207.0 974.0,309.8 974.9,223.1 976.2,192.9 976.8,275.6 977.5,326.6 979.8,340.1 982.2,340.1 982.9,297.7 984.4,242.3 984.7,324.0 986.2,223.1 987.3,279.6 988.0,329.4 988.9,330.2 989.8,326.6 991.3,329.4 992.5,340.1 993.3,259.4 993.8,158.6 995.3,214.4 996.7,210.0 998.5,130.3 999.6,182.8 1000.4,259.4 1000.7,297.7 1002.5,326.6 1004.4,340.1 1005.3,307.8 1006.5,326.6 1007.6,340.1 1008.9,297.7 1009.8,271.5 1010.3,319.9 1011.6,338.1 1013.4,334.0 1014.3,289.7 1015.2,330.2 1016.7,330.2 1017.4,284.8 1017.6,223.1 1018.5,225.1 1020.7,223.1 1021.8,222.3 1022.9,213.0 1023.6,304.8 1024.1,277.6 1024.7,315.9 1026.1,326.6 1027.6,324.0 1029.8,340.1 1032.5,340.1 1035.2,326.6 1035.9,243.3 1036.3,194.9 1037.4,223.1 1038.8,223.1 1039.9,268.5 1040.7,229.2 1041.4,301.8 1041.8,201.9 1042.5,317.9 1042.8,200.9 1043.7,118.2 1044.8,164.6 1045.4,225.1 1046.1,279.6 1047.0,313.9 1048.8,340.1 1056.1,340.1 1058.8,301.8 1060.1,291.7 1061.5,308.4 1062.1,188.8 1062.8,142.4 1064.3,224.5 1065.7,150.5 1067.0,208.2 1067.9,188.2 1069.2,132.3 1070.1,219.1 1070.8,328.0 1071.5,194.9 1072.4,194.9 1073.3,328.0 1074.2,239.3 1075.2,323.0 1077.9,340.1 1080.2,340.1 1081.7,326.6 1082.4,182.8 1083.1,146.5 1084.6,182.8 1085.7,223.1 1086.6,174.7 1087.9,182.8 1088.8,221.1 1089.7,184.8 1090.8,219.1 1091.5,239.3 1092.4,279.6 1095.1,340.1 1100.6,340.1 1101.3,323.0 1101.7,178.7 1102.6,178.1 1103.3,198.9 1104.6,152.5 1105.5,188.8 1106.0,304.8 1106.9,265.5 1107.5,330.0" fill="none" stroke="#2196f3" stroke-width="1.95" stroke-linejoin="round"/><polyline points="653.9,204.8 654.4,179.4 654.8,203.6 655.3,162.7 655.7,200.8 656.3,160.7 656.7,213.0 657.2,174.2 657.5,192.9 658.1,173.3 658.6,211.5 658.9,170.5 659.3,210.7 659.6,159.2 660.1,205.1 660.6,170.3 661.1,203.8" fill="none" stroke="#2196f3" stroke-width="1.6" stroke-linejoin="round"/><polyline points="661.5,301.1 661.8,248.8 662.3,281.9 662.7,214.7 663.0,309.5 663.3,237.2 663.6,281.6 664.0,246.8 664.4,323.9 664.7,244.4 665.0,274.9 665.4,202.6" fill="none" stroke="#2196f3" stroke-width="1.6" stroke-linejoin="round"/><polyline points="676.4,207.8 676.8,184.0 677.2,205.1 677.7,184.5 678.1,217.6 678.4,194.3 678.8,211.0 679.2,185.5 679.8,217.2 680.3,184.5 680.7,216.0 681.1,196.9 681.6,214.7" fill="none" stroke="#2196f3" stroke-width="1.6" stroke-linejoin="round"/><polyline points="766.1,213.6 766.5,176.6 767.0,216.5 767.6,160.0 768.0,199.1 768.4,162.2 768.7,216.8 769.2,160.8 769.7,209.5 770.1,179.3" fill="none" stroke="#2196f3" stroke-width="1.6" stroke-linejoin="round"/><polyline points="782.4,196.8 783.2,165.8 783.7,190.9 784.5,167.0 785.0,193.9 785.8,166.1 786.6,191.3 787.3,170.1 787.7,206.3 788.6,166.8 789.3,202.4 790.0,173.2 790.6,203.9" fill="none" stroke="#2196f3" stroke-width="1.6" stroke-linejoin="round"/><polyline points="809.7,237.9 810.1,201.7 810.7,227.4 811.1,208.6 811.5,238.9 812.0,199.5 812.3,235.8 812.8,201.9 813.2,232.2 813.8,209.8 814.3,225.9 814.9,193.6 815.2,238.9 815.8,204.4 816.5,238.8 817.0,200.2 817.6,233.1 818.2,192.3 818.7,225.0 819.4,205.1 819.9,223.9 820.5,197.7 821.1,221.8 821.7,198.9 822.3,222.5 822.8,202.9 823.3,228.0 823.8,192.4 824.4,220.0 825.0,204.9 825.4,225.0 826.0,199.4 826.6,237.6 827.1,191.4 827.7,229.9 828.1,204.4 828.6,227.4 829.2,195.8 829.6,233.4 830.1,194.8 830.5,221.7 831.1,199.4 831.7,232.9 832.2,194.7 832.7,223.6 833.3,207.9 833.8,228.0 834.2,193.5 834.7,223.0 835.3,204.6 836.0,233.9 836.4,199.6 836.8,235.1 837.3,203.0 837.8,233.1 838.4,209.9 838.9,237.8 839.2,207.7 839.6,225.5 840.1,196.8" fill="none" stroke="#2196f3" stroke-width="1.6" stroke-linejoin="round"/><polyline points="859.4,244.9 859.8,204.0 860.2,228.6 860.7,197.7 861.1,232.6 861.6,207.6 862.2,229.0 862.9,208.7 863.3,235.7 863.8,195.1 864.3,230.9 864.7,200.4 865.2,231.2 865.8,207.3 866.4,237.4 867.1,213.2 867.5,226.5 868.1,197.5 868.6,232.7 869.3,202.5 869.9,227.6" fill="none" stroke="#2196f3" stroke-width="1.6" stroke-linejoin="round"/><polyline points="870.0,227.8 870.5,211.0 871.0,231.9 871.6,210.8 872.2,241.3 872.9,217.1 873.6,235.3 874.3,204.9 874.9,229.4 875.4,200.4 876.0,235.1" fill="none" stroke="#2196f3" stroke-width="1.6" stroke-linejoin="round"/><polyline points="882.0,203.3 882.3,164.5 882.6,193.3 883.0,149.2 883.5,214.5 883.9,155.1 884.4,192.0 884.9,168.9 885.4,188.4 885.7,145.5 886.2,209.7" fill="none" stroke="#2196f3" stroke-width="1.6" stroke-linejoin="round"/><polyline points="886.0,250.0 886.5,222.1 887.1,258.9 887.6,222.1 888.3,261.8 888.9,225.5 889.5,251.8 889.9,213.6 890.5,250.9 890.9,225.5 891.4,256.5 892.1,214.4 892.6,248.5 893.0,213.7 893.5,241.2 894.2,206.3" fill="none" stroke="#2196f3" stroke-width="1.6" stroke-linejoin="round"/><polyline points="923.7,272.5 924.2,234.8 924.8,264.0 925.3,219.7 925.8,253.2 926.2,233.9 926.6,270.9 927.0,231.7 927.4,267.0 928.0,217.6 928.5,272.6 929.0,221.1 929.4,262.7 929.9,224.1 930.4,262.7 930.8,220.0 931.3,260.1 931.8,235.6 932.4,254.8 932.8,233.0 933.4,253.7 933.8,222.7 934.5,270.3 935.1,236.5 935.5,269.8 936.1,221.3 936.4,255.4 936.9,234.2 937.3,265.8 937.9,215.5 938.3,259.0" fill="none" stroke="#2196f3" stroke-width="1.6" stroke-linejoin="round"/><polyline points="939.0,240.4 939.4,228.8 940.0,245.7 940.6,225.2 941.0,250.2 941.4,229.3 942.0,244.9 942.4,225.2" fill="none" stroke="#2196f3" stroke-width="1.6" stroke-linejoin="round"/><polyline points="942.6,259.3 943.3,241.5 943.6,278.1 944.3,230.3 944.9,271.7 945.3,231.6 945.8,265.0 946.2,236.0 946.8,275.2 947.3,237.0 947.7,274.9 948.1,231.5 948.5,258.0 949.1,236.1 949.7,264.4 950.2,233.6 950.7,255.8 951.3,225.3 951.9,261.6 952.5,238.8 952.9,257.9 953.5,235.9 954.1,261.1 954.6,236.6 955.0,271.3 955.5,219.3 955.9,264.1" fill="none" stroke="#2196f3" stroke-width="1.6" stroke-linejoin="round"/><polyline points="971.3,264.8 972.0,232.5 972.5,256.2 973.1,229.8 973.6,249.3 974.2,233.2 974.8,249.7 975.2,231.5 975.8,264.3 976.3,220.1" fill="none" stroke="#2196f3" stroke-width="1.6" stroke-linejoin="round"/><polyline points="985.5,314.1 985.8,244.5 986.4,307.6 986.8,271.1 987.3,291.1 987.8,265.3 988.1,305.8 988.7,236.9 989.2,322.1 989.7,241.5 990.1,305.3" fill="none" stroke="#2196f3" stroke-width="1.6" stroke-linejoin="round"/><polyline points="993.8,196.7 994.3,176.8 994.9,208.0 995.4,179.3 996.0,209.6 996.6,172.4 997.0,210.3 997.4,169.7 998.0,207.5 998.7,181.1 999.1,195.9" fill="none" stroke="#2196f3" stroke-width="1.6" stroke-linejoin="round"/><polyline points="1017.8,278.0 1018.5,234.5 1019.0,258.4 1019.5,236.5 1020.1,263.8 1020.7,246.5 1021.3,266.4 1021.7,238.7 1022.3,275.2 1022.7,236.6" fill="none" stroke="#2196f3" stroke-width="1.6" stroke-linejoin="round"/><polyline points="1038.1,284.0 1038.7,227.2 1039.2,279.1 1039.7,238.6 1040.3,264.3 1041.0,237.1 1041.4,295.7 1042.1,238.9 1042.7,287.0 1043.1,235.3 1043.7,278.8 1044.3,237.8" fill="none" stroke="#2196f3" stroke-width="1.6" stroke-linejoin="round"/><polyline points="1062.1,213.1 1062.8,180.7 1063.5,218.1 1063.9,165.1 1064.4,204.0 1064.8,171.7 1065.2,217.0 1065.8,171.9 1066.4,210.0 1066.9,163.7 1067.4,201.1 1068.1,160.4 1068.5,199.5 1069.1,177.2 1069.5,208.8" fill="none" stroke="#2196f3" stroke-width="1.6" stroke-linejoin="round"/><polyline points="1070.3,283.5 1070.6,231.6 1071.1,307.7 1071.4,236.2 1071.9,302.6 1072.2,203.8 1072.7,320.0 1072.9,227.1 1073.3,289.7" fill="none" stroke="#2196f3" stroke-width="1.6" stroke-linejoin="round"/><polyline points="1082.4,210.6 1082.8,186.2 1083.4,221.8 1083.9,194.5 1084.5,218.5 1084.9,188.5 1085.6,217.2 1086.0,194.2 1086.5,208.3 1087.2,197.5 1087.8,210.2 1088.2,187.9 1088.7,208.0 1089.4,186.8 1089.9,217.2 1090.4,189.2" fill="none" stroke="#2196f3" stroke-width="1.6" stroke-linejoin="round"/><polyline points="1101.7,253.1 1102.2,204.5 1102.8,232.4 1103.4,184.4 1104.0,231.0 1104.5,179.5 1105.0,241.9 1105.6,209.9" fill="none" stroke="#2196f3" stroke-width="1.6" stroke-linejoin="round"/></svg>
<div class="t" style="top:333.23px;font-size:12.6px;line-height:15px;height:15px;color:#757575;letter-spacing:-0.2px;left:235.79999999999995px;width:400px;text-align:right;">0</div>
<div class="t" style="top:313.06px;font-size:12.6px;line-height:15px;height:15px;color:#757575;letter-spacing:-0.2px;left:235.79999999999995px;width:400px;text-align:right;">10</div>
<div class="t" style="top:292.89px;font-size:12.6px;line-height:15px;height:15px;color:#757575;letter-spacing:-0.2px;left:235.79999999999995px;width:400px;text-align:right;">20</div>
<div class="t" style="top:272.72px;font-size:12.6px;line-height:15px;height:15px;color:#757575;letter-spacing:-0.2px;left:235.79999999999995px;width:400px;text-align:right;">30</div>
<div class="t" style="top:252.55px;font-size:12.6px;line-height:15px;height:15px;color:#757575;letter-spacing:-0.2px;left:235.79999999999995px;width:400px;text-align:right;">40</div>
<div class="t" style="top:232.38px;font-size:12.6px;line-height:15px;height:15px;color:#757575;letter-spacing:-0.2px;left:235.79999999999995px;width:400px;text-align:right;">50</div>
<div class="t" style="top:212.21px;font-size:12.6px;line-height:15px;height:15px;color:#757575;letter-spacing:-0.2px;left:235.79999999999995px;width:400px;text-align:right;">60</div>
<div class="t" style="top:192.04px;font-size:12.6px;line-height:15px;height:15px;color:#757575;letter-spacing:-0.2px;left:235.79999999999995px;width:400px;text-align:right;">70</div>
<div class="t" style="top:171.87px;font-size:12.6px;line-height:15px;height:15px;color:#757575;letter-spacing:-0.2px;left:235.79999999999995px;width:400px;text-align:right;">80</div>
<div class="t" style="top:151.70px;font-size:12.6px;line-height:15px;height:15px;color:#757575;letter-spacing:-0.2px;left:235.79999999999995px;width:400px;text-align:right;">90</div>
<div class="t" style="top:131.53px;font-size:12.6px;line-height:15px;height:15px;color:#757575;letter-spacing:-0.2px;left:235.79999999999995px;width:400px;text-align:right;">100</div>
<div class="t" style="top:111.36px;font-size:12.6px;line-height:15px;height:15px;color:#757575;letter-spacing:-0.2px;left:235.79999999999995px;width:400px;text-align:right;">110</div>
<div class="t" style="top:344.53px;font-size:12.6px;line-height:15px;height:15px;color:#757575;letter-spacing:-0.45px;left:480.29999999999995px;width:400px;text-align:center;">10:00</div>
<div class="t" style="top:360.73px;font-size:12.6px;line-height:15px;height:15px;color:#757575;letter-spacing:-0.45px;left:480.29999999999995px;width:400px;text-align:center;">11.04</div>
<div class="t" style="top:344.53px;font-size:12.6px;line-height:15px;height:15px;color:#757575;letter-spacing:-0.45px;left:616.7px;width:400px;text-align:center;">11:00</div>
<div class="t" style="top:360.73px;font-size:12.6px;line-height:15px;height:15px;color:#757575;letter-spacing:-0.45px;left:616.7px;width:400px;text-align:center;">11.04</div>
<div class="t" style="top:344.53px;font-size:12.6px;line-height:15px;height:15px;color:#757575;letter-spacing:-0.45px;left:753px;width:400px;text-align:center;">12:00</div>
<div class="t" style="top:360.73px;font-size:12.6px;line-height:15px;height:15px;color:#757575;letter-spacing:-0.45px;left:753px;width:400px;text-align:center;">11.04</div>
<div class="t" style="top:344.53px;font-size:12.6px;line-height:15px;height:15px;color:#757575;letter-spacing:-0.45px;left:889.3px;width:400px;text-align:center;">13:00</div>
<div class="t" style="top:360.73px;font-size:12.6px;line-height:15px;height:15px;color:#757575;letter-spacing:-0.45px;left:889.3px;width:400px;text-align:center;">11.04</div>
<div class="t" style="left:596.5px;top:227.2px;width:0;height:0;font-size:12.2px;color:#808080;"><div style="position:absolute;white-space:pre;transform:translate(-50%,-50%) rotate(-90deg);line-height:14px">Speed, km/h</div></div>
</body></html>
